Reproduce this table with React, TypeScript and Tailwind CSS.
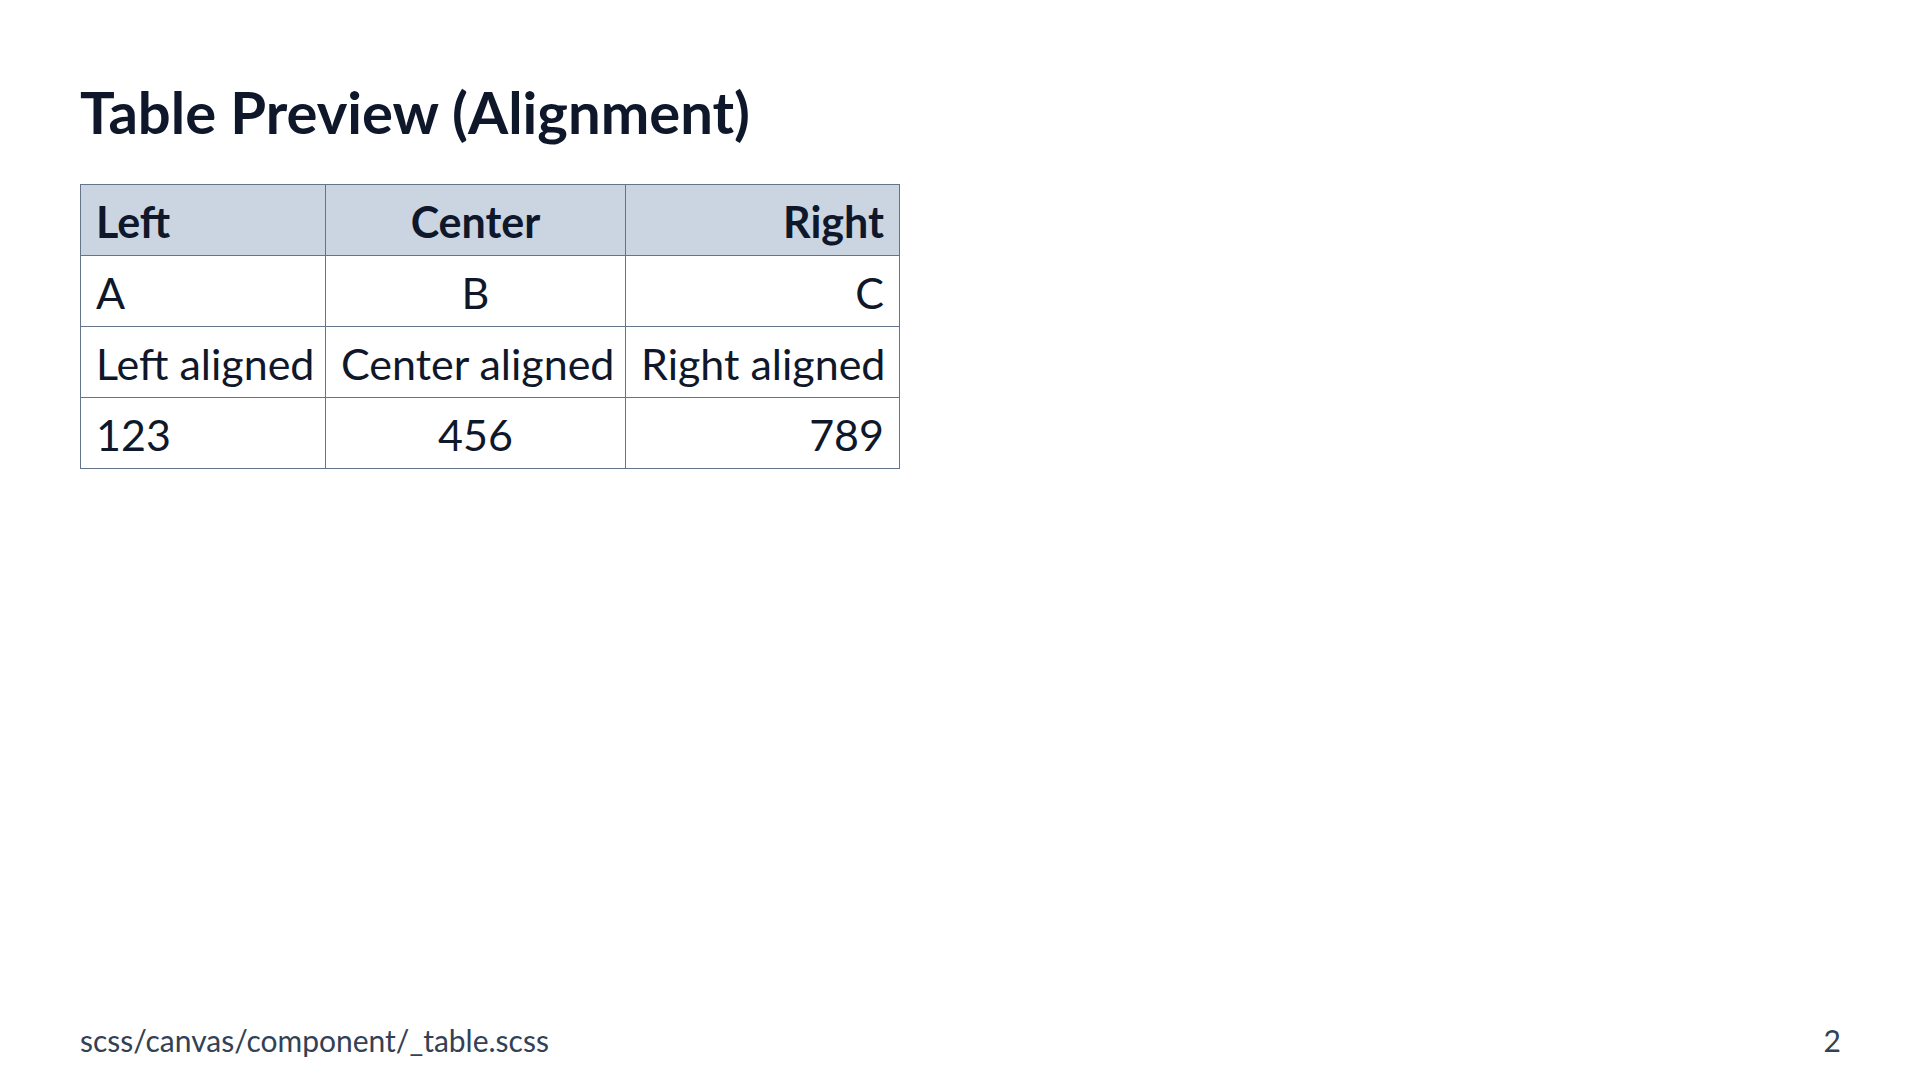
import React from "react";

const rows: [string, string, string][] = [
  ["A", "B", "C"],
  ["Left aligned", "Center aligned", "Right aligned"],
  ["123", "456", "789"],
];

export default function App() {
  return (
    <div
      className="w-[1920px] h-[1080px] bg-white flex flex-col px-[80px] text-[#0f172a]"
      style={{ fontFamily: "Lato, 'Noto Sans', sans-serif" }}
    >
      <h1 className="mt-[79px] text-[58px] leading-[66px] font-bold">
        Table Preview (Alignment)
      </h1>
      <table className="mt-[39px] border-collapse text-[43px] leading-[54px] w-[819px] table-fixed">
        <colgroup>
          <col className="w-[245px]" />
          <col className="w-[300px]" />
          <col className="w-[274px]" />
        </colgroup>
        <thead>
          <tr className="bg-[#cbd5e1] h-[71px]">
            <th className="border border-[#64748b] pl-[15px] pr-[14px] pt-[4px] text-left font-bold whitespace-nowrap">Left</th>
            <th className="border border-[#64748b] px-[15px] pt-[4px] text-center font-bold whitespace-nowrap">Center</th>
            <th className="border border-[#64748b] px-[15px] pt-[4px] text-right font-bold whitespace-nowrap">Right</th>
          </tr>
        </thead>
        <tbody>
          {rows.map((r, i) => (
            <tr key={i} className="h-[71px]">
              <td className="border border-[#64748b] pl-[15px] pr-[14px] pt-[4px] text-left whitespace-nowrap">{r[0]}</td>
              <td className="border border-[#64748b] px-[15px] pt-[4px] text-center whitespace-nowrap">{r[1]}</td>
              <td className="border border-[#64748b] px-[15px] pt-[4px] text-right whitespace-nowrap">{r[2]}</td>
            </tr>
          ))}
        </tbody>
      </table>
      <div className="mt-auto mb-[22px] flex justify-between items-end text-[30px] leading-[36px] text-[#334155]">
        <span>scss/canvas/component/_table.scss</span>
        <span className="-mr-[1px]">2</span>
      </div>
    </div>
  );
}
